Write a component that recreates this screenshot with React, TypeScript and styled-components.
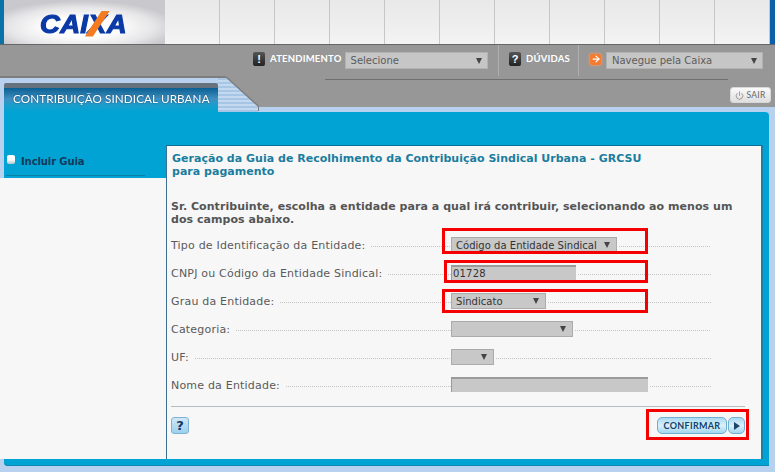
import React from "react";
import styled, { createGlobalStyle } from "styled-components";
import { ArrowRight, Power } from "lucide-react";

const BLUE = "#00a3d3";
const SKY = "#b7d1ee";
const PAPER = "#f7f7f7";

const Global = createGlobalStyle`
  html, body { margin: 0; padding: 0; background: ${SKY}; }
  body { font-family: "DejaVu Sans", Verdana, sans-serif; }
  * { box-sizing: border-box; }
`;

const Page = styled.div`
  width: 775px;
  height: 472px;
  display: flex;
  flex-direction: column;
  overflow: hidden;
  background: ${SKY};
`;

const Header = styled.header`
  height: 45px;
  flex: none;
  display: flex;
  border-bottom: 1px solid #666;
  background: linear-gradient(#e9e9e9, #eeeeee 60%, #f4f4f4);
`;

const HeaderEdge = styled.div<{ $w: number; $c: string }>`
  width: ${(p) => p.$w}px;
  flex: none;
  background: ${(p) => p.$c};
`;

const LogoBox = styled.div`
  width: 161px;
  flex: none;
  display: flex;
  align-items: center;
  justify-content: center;
  padding: 3px 3px 0 0;
  background: radial-gradient(ellipse 60% 60% at 48% 62%, #ffffff 35%, #e6e6e8 75%, #c9c8cc 100%);
`;

const LogoText = styled.div`
  font-family: "Liberation Sans", Arial, sans-serif;
  font-weight: 700;
  font-style: italic;
  font-size: 25px;
  line-height: 20px;
  letter-spacing: 0.2px;
  color: #0a3aa6;
  -webkit-text-stroke: 1.1px #0a3aa6;
  transform: scaleX(1.1);
`;

const LogoX = styled.span`
  position: relative;
  &::after {
    content: "";
    position: absolute;
    left: -3px;
    right: -3px;
    top: 1px;
    bottom: 1px;
    background: #f47b20;
    clip-path: polygon(68% 0, 100% 0, 32% 100%, 0 100%);
  }
`;

const Cells = styled.div`
  flex: 1;
  display: flex;
`;

const Cell = styled.div`
  width: 55px;
  flex: none;
  border-right: 1px solid #c6c6c6;
`;

const NavBar = styled.nav`
  height: 33px;
  flex: none;
  display: flex;
  align-items: flex-start;
  padding-left: 253px;
  background: linear-gradient(#7f7f7f, #7f7f7f) 0 100% / 226px 2px no-repeat, #979797;
`;

const NavGroup = styled.div<{ $w: number; $line?: boolean }>`
  width: ${(p) => p.$w}px;
  height: 31px;
  flex: none;
  display: flex;
  align-items: center;
  border-right: ${(p) => (p.$line ? "1px solid #aeaeae" : "none")};
`;

const Badge = styled.span`
  width: 12px;
  height: 14px;
  flex: none;
  margin-top: -3px;
  display: flex;
  align-items: center;
  justify-content: center;
  border-radius: 2px;
  background: linear-gradient(#555, #222);
  color: #fff;
  font: 700 11px/1 "Liberation Sans", sans-serif;
`;

const BadgeGap = styled.span`
  width: 10px;
  flex: none;
`;

const NavLabel = styled.span`
  margin: -4px 0 0 5px;
  font: 700 9.5px/1 "Lato", sans-serif;
  color: #fff;
  letter-spacing: 0.2px;
  white-space: nowrap;
`;

const NavSelect = styled.div<{ $w: number; $ml: number }>`
  width: ${(p) => p.$w}px;
  margin-left: ${(p) => p.$ml}px;
  height: 17px;
  flex: none;
  display: flex;
  align-items: center;
  justify-content: space-between;
  padding: 0 5px;
  background: #c6c6c6;
  border: 1px solid #b2b2b2;
  color: #5c5c5c;
  font-size: 10px;
  white-space: nowrap;
`;

const Caret = styled.span`
  width: 0;
  height: 0;
  flex: none;
  border-left: 3.5px solid transparent;
  border-right: 3.5px solid transparent;
  border-top: 6px solid #444;
`;

const ArrowBadge = styled.span`
  width: 11px;
  height: 11px;
  margin: -3px 0 0 11px;
  flex: none;
  display: flex;
  align-items: center;
  justify-content: center;
  border-radius: 2px;
  background: #f47b30;
  box-shadow: 0 0 2px 1px #d99a70;
  color: #fff;
`;

const TabStrip = styled.div`
  height: 34px;
  flex: none;
  display: flex;
  background: linear-gradient(#979797 0 29px, ${SKY} 29px);
`;

const TabSlot = styled.div`
  width: 258px;
  flex: none;
  filter: drop-shadow(1px -1px 0 #7d7d7d);
`;

const TabShape = styled.div`
  width: 258px;
  height: 34px;
  padding: 5px 0 0 4px;
  background:
    repeating-linear-gradient(#a7c6e6 0 2px, #c4d8ef 2px 4px) 218px 0 / 40px 100% no-repeat,
    ${SKY};
  clip-path: polygon(0 0, 226px 0, 258px 29px, 258px 100%, 0 100%);
`;

const Tab = styled.div`
  width: 214px;
  height: 29px;
  padding: 3px 0 0 9px;
  border-top: 5px solid #66727d;
  border-radius: 2px 2px 0 0;
  background: linear-gradient(#0a5f92, #3f8fc0 45%, #1c9dcc 70%, ${BLUE});
  color: #fff;
  font: 400 11.7px/15px "Lato", sans-serif;
  letter-spacing: 0.1px;
  text-shadow: 0 0 2px #0b4468;
  white-space: nowrap;
`;

const StripEnd = styled.div`
  flex: 1;
  display: flex;
  flex-direction: column;
  align-items: flex-end;
`;

const NavRule = styled.div`
  align-self: flex-start;
  margin: 1px 0 0 67px;
  width: 403px;
  height: 1px;
  background: #6f6f6f;
`;

const Sair = styled.button`
  margin: 7px 4px 0 0;
  width: 41px;
  height: 16px;
  padding: 0;
  display: flex;
  align-items: center;
  justify-content: center;
  gap: 2px;
  border: 1px solid #d8d8d8;
  border-radius: 3px;
  background: linear-gradient(#fafafa, #dfdfdf);
  color: #666;
  font: 400 8.5px/1 "Lato", sans-serif;
  letter-spacing: 0.3px;
`;

const Shell = styled.main`
  flex: 1;
  margin: 0 6px 6px 4px;
  padding: 33px 0 7px;
  display: flex;
  border-radius: 0 4px 0 4px;
  background: ${BLUE};
  box-shadow: inset 0 -1px 0 #0b89b4;
`;

const Sidebar = styled.aside`
  width: 166px;
  margin-left: -4px;
  flex: none;
  background: ${PAPER};
`;

const SideHead = styled.div`
  height: 33px;
  padding-left: 2px;
  border-left: 4px solid ${SKY};
  background: ${BLUE};
`;

const SideItem = styled.div`
  width: 139px;
  height: 31px;
  display: flex;
  align-items: center;
  gap: 6px;
  padding: 2px 0 0 1px;
  border-bottom: 1px solid #0a7fa8;
  color: #12395c;
  font-size: 10px;
  letter-spacing: -0.1px;
  font-weight: 700;
`;

const SideBox = styled.span`
  width: 8px;
  height: 9px;
  flex: none;
  margin-top: -4px;
  border-radius: 2px;
  background: linear-gradient(#fff 50%, #b9c4cc);
`;

const Panel = styled.section`
  flex: 1;
  min-width: 0;
  margin-right: 6px;
  padding: 6px 16px 0 4px;
  display: flex;
  flex-direction: column;
  background: ${PAPER};
  border-top: 1px solid #0a7097;
  border-left: 1px solid #3d6f93;
  border-right: 2px solid #1f7fa3;
`;

const Title = styled.h1`
  margin: 0 0 22px 1px;
  font-size: 11px;
  line-height: 13px;
  font-weight: 700;
  letter-spacing: 0.02px;
  color: #1b7d9e;
`;

const Intro = styled.p`
  margin: 0 0 5px;
  width: 570px;
  font-size: 11px;
  line-height: 13px;
  font-weight: 700;
  letter-spacing: 0.05px;
  color: #555;
`;

const Row = styled.div`
  position: relative;
  width: 540px;
  height: 28px;
  display: flex;
  align-items: center;
`;

const LabelCell = styled.div`
  width: 280px;
  flex: none;
  display: flex;
  align-items: center;
  gap: 4px;
`;

const Label = styled.label`
  font-size: 11px;
  letter-spacing: 0.2px;
  color: #5a5a5a;
  white-space: nowrap;
`;

const Leader = styled.span`
  flex: 1;
  min-width: 0;
  height: 1px;
  margin-top: 2px;
  margin-left: 2px;
  background: repeating-linear-gradient(90deg, #c4c4c4 0 1px, transparent 1px 2px);
`;

const Select = styled.div<{ $w: number }>`
  width: ${(p) => p.$w}px;
  height: 16px;
  flex: none;
  display: flex;
  align-items: center;
  justify-content: space-between;
  padding: 0 6px 0 4px;
  background: #c8c8c8;
  border: 1px solid #ababab;
  color: #333;
  font-size: 10px;
  letter-spacing: 0.03px;
  white-space: nowrap;
`;

const TextField = styled.div<{ $w: number }>`
  width: ${(p) => p.$w}px;
  height: 15px;
  flex: none;
  margin-bottom: 1px;
  display: flex;
  align-items: center;
  padding-left: 1px;
  background: #c8c8c8;
  border-top: 2px solid #9a9a9a;
  border-left: 1px solid #9a9a9a;
  color: #333;
  font-size: 10px;
  letter-spacing: 0.2px;
`;

const Highlight = styled.div<{ $l: number; $t: number; $w: number; $h: number }>`
  position: absolute;
  left: ${(p) => p.$l}px;
  top: ${(p) => p.$t}px;
  width: ${(p) => p.$w}px;
  height: ${(p) => p.$h}px;
  border: 3px solid #f50000;
  pointer-events: none;
`;

const FooterRule = styled.hr`
  width: 100%;
  margin: 7px 0 0;
  border: 0;
  height: 1px;
  background: #b4bcbf;
`;

const Footer = styled.div`
  position: relative;
  display: flex;
  align-items: center;
  justify-content: space-between;
  margin-top: 10px;
`;

const HelpButton = styled.button`
  width: 18px;
  height: 17px;
  padding: 0;
  border: 1px solid #7fb3d6;
  border-radius: 3px;
  background: linear-gradient(#cfe8f8, #9cd0ee);
  color: #16345c;
  font: 700 13px/1 "DejaVu Sans", sans-serif;
`;

const ButtonPair = styled.div`
  display: flex;
  gap: 1px;
`;

const Confirm = styled.button`
  width: 70px;
  height: 17px;
  padding: 0;
  border: 1px solid #74aecf;
  border-radius: 5px;
  background: linear-gradient(#a9d9f2, #d8f1fb 50%, #a2d6f0);
  color: #123f66;
  font: 700 9px/1 "Lato", sans-serif;
  letter-spacing: 0.3px;
`;

const ConfirmArrow = styled.button`
  width: 17px;
  height: 17px;
  padding: 0 0 0 1px;
  display: flex;
  align-items: center;
  justify-content: center;
  border: 1px solid #74aecf;
  border-radius: 5px;
  background: linear-gradient(#a9d9f2, #d8f1fb 50%, #a2d6f0);
`;

const Play = styled.span`
  width: 0;
  height: 0;
  border-top: 4px solid transparent;
  border-bottom: 4px solid transparent;
  border-left: 6px solid #1f4668;
`;

const ButtonMark = styled.div`
  position: absolute;
  right: -4px;
  top: -8px;
  width: 103px;
  height: 31px;
  border: 3px solid #f50000;
  pointer-events: none;
`;

export default function App() {
  return (
    <Page>
      <Global />
      <Header>
        <HeaderEdge $w={4} $c="#0a72a8" />
        <LogoBox>
          <LogoText>
            CAI<LogoX>X</LogoX>A
          </LogoText>
        </LogoBox>
        <Cells>
          {Array.from({ length: 11 }, (_, i) => (
            <Cell key={i} />
          ))}
        </Cells>
        <HeaderEdge $w={6} $c="#0c5fa8" />
      </Header>
      <NavBar>
        <NavGroup $w={246} $line>
          <Badge>!</Badge>
          <NavLabel>ATENDIMENTO</NavLabel>
          <NavSelect $w={143} $ml={3}>
            Selecione
            <Caret />
          </NavSelect>
        </NavGroup>
        <NavGroup $w={80} $line>
          <BadgeGap />
          <Badge>?</Badge>
          <NavLabel>DÚVIDAS</NavLabel>
        </NavGroup>
        <NavGroup $w={185}>
          <ArrowBadge>
            <ArrowRight size={10} strokeWidth={3} />
          </ArrowBadge>
          <NavSelect $w={157} $ml={5}>
            Navegue pela Caixa
            <Caret />
          </NavSelect>
        </NavGroup>
      </NavBar>
      <TabStrip>
        <TabSlot>
          <TabShape>
            <Tab>CONTRIBUIÇÃO SINDICAL URBANA</Tab>
          </TabShape>
        </TabSlot>
        <StripEnd>
          <NavRule />
          <Sair>
            <Power size={9} strokeWidth={1.6} />
            SAIR
          </Sair>
        </StripEnd>
      </TabStrip>
      <Shell>
        <Sidebar>
          <SideHead>
            <SideItem>
              <SideBox />
              Incluir Guia
            </SideItem>
          </SideHead>
        </Sidebar>
        <Panel>
          <Title>
            Geração da Guia de Recolhimento da Contribuição Sindical Urbana - GRCSU
            <br />
            para pagamento
          </Title>
          <Intro>
            Sr. Contribuinte, escolha a entidade para a qual irá contribuir, selecionando ao menos um dos campos abaixo.
          </Intro>
          <Row>
            <LabelCell>
              <Label>Tipo de Identificação da Entidade:</Label>
              <Leader />
            </LabelCell>
            <Select $w={166}>
              Código da Entidade Sindical
              <Caret />
            </Select>
            <Leader />
            <Highlight $l={271} $t={-3} $w={206} $h={26} />
          </Row>
          <Row>
            <LabelCell>
              <Label>CNPJ ou Código da Entidade Sindical:</Label>
              <Leader />
            </LabelCell>
            <TextField $w={125}>01728</TextField>
            <Leader />
            <Highlight $l={273} $t={1} $w={204} $h={23} />
          </Row>
          <Row>
            <LabelCell>
              <Label>Grau da Entidade:</Label>
              <Leader />
            </LabelCell>
            <Select $w={95}>
              Sindicato
              <Caret />
            </Select>
            <Leader />
            <Highlight $l={271} $t={2} $w={206} $h={24} />
          </Row>
          <Row>
            <LabelCell>
              <Label>Categoria:</Label>
              <Leader />
            </LabelCell>
            <Select $w={122}>
              <span />
              <Caret />
            </Select>
            <Leader />
          </Row>
          <Row>
            <LabelCell>
              <Label>UF:</Label>
              <Leader />
            </LabelCell>
            <Select $w={43}>
              <span />
              <Caret />
            </Select>
            <Leader />
          </Row>
          <Row>
            <LabelCell>
              <Label>Nome da Entidade:</Label>
              <Leader />
            </LabelCell>
            <TextField $w={197} />
            <Leader />
          </Row>
          <FooterRule />
          <Footer>
            <HelpButton>?</HelpButton>
            <ButtonPair>
              <Confirm>CONFIRMAR</Confirm>
              <ConfirmArrow>
                <Play />
              </ConfirmArrow>
            </ButtonPair>
            <ButtonMark />
          </Footer>
        </Panel>
      </Shell>
    </Page>
  );
}
